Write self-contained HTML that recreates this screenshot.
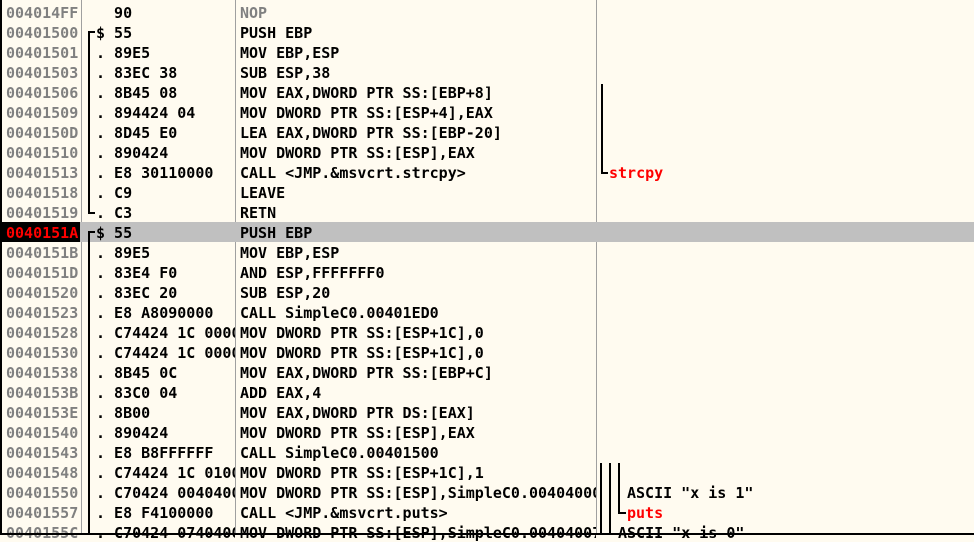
<!DOCTYPE html><html><head><style>
body{margin:0;width:974px;height:535px;overflow:hidden;background:#fffbf0;position:relative;font:bold 15px "DejaVu Sans Mono","Liberation Mono",monospace;}
.r{position:absolute;left:0;width:974px;height:20px;line-height:23px;white-space:pre;}
.r span{position:absolute;top:0;overflow:hidden;height:20px}
.a{left:6px;width:74px;color:#808080}
.h{left:96px;width:139px;color:#000}
.d{left:240px;width:356px;color:#000}
.c{left:627px;color:#000}
.sel{background:#c0c0c0}
.sel .a{left:0;width:80px;background:#000;color:#ff0000;padding-left:6px;box-sizing:border-box}
.v{position:absolute;background:#000}
.g{position:absolute;top:0;width:1px;height:535px;background:#a0a0a0}
</style></head><body>
<div class="g" style="left:81px"></div><div class="g" style="left:235px"></div><div class="g" style="left:596px"></div>
<div class="r" style="top:2px"><span class="a">004014FF</span><span class="h">  90</span><span class="d" style="color:#808080">NOP</span></div>
<div class="r" style="top:22px"><span class="a">00401500</span><span class="h">$ 55</span><span class="d">PUSH EBP</span></div>
<div class="r" style="top:42px"><span class="a">00401501</span><span class="h">. 89E5</span><span class="d">MOV EBP,ESP</span></div>
<div class="r" style="top:62px"><span class="a">00401503</span><span class="h">. 83EC 38</span><span class="d">SUB ESP,38</span></div>
<div class="r" style="top:82px"><span class="a">00401506</span><span class="h">. 8B45 08</span><span class="d">MOV EAX,DWORD PTR SS:[EBP+8]</span></div>
<div class="r" style="top:102px"><span class="a">00401509</span><span class="h">. 894424 04</span><span class="d">MOV DWORD PTR SS:[ESP+4],EAX</span></div>
<div class="r" style="top:122px"><span class="a">0040150D</span><span class="h">. 8D45 E0</span><span class="d">LEA EAX,DWORD PTR SS:[EBP-20]</span></div>
<div class="r" style="top:142px"><span class="a">00401510</span><span class="h">. 890424</span><span class="d">MOV DWORD PTR SS:[ESP],EAX</span></div>
<div class="r" style="top:162px"><span class="a">00401513</span><span class="h">. E8 30110000</span><span class="d">CALL &lt;JMP.&amp;msvcrt.strcpy&gt;</span><span style="left:609px;color:#ff0000">strcpy</span></div>
<div class="r" style="top:182px"><span class="a">00401518</span><span class="h">. C9</span><span class="d">LEAVE</span></div>
<div class="r" style="top:202px"><span class="a">00401519</span><span class="h">. C3</span><span class="d">RETN</span></div>
<div class="r sel" style="top:222px"><span class="a">0040151A</span><span class="h">$ 55</span><span class="d">PUSH EBP</span></div>
<div class="r" style="top:242px"><span class="a">0040151B</span><span class="h">. 89E5</span><span class="d">MOV EBP,ESP</span></div>
<div class="r" style="top:262px"><span class="a">0040151D</span><span class="h">. 83E4 F0</span><span class="d">AND ESP,FFFFFFF0</span></div>
<div class="r" style="top:282px"><span class="a">00401520</span><span class="h">. 83EC 20</span><span class="d">SUB ESP,20</span></div>
<div class="r" style="top:302px"><span class="a">00401523</span><span class="h">. E8 A8090000</span><span class="d">CALL SimpleC0.00401ED0</span></div>
<div class="r" style="top:322px"><span class="a">00401528</span><span class="h">. C74424 1C 00000000</span><span class="d">MOV DWORD PTR SS:[ESP+1C],0</span></div>
<div class="r" style="top:342px"><span class="a">00401530</span><span class="h">. C74424 1C 00000000</span><span class="d">MOV DWORD PTR SS:[ESP+1C],0</span></div>
<div class="r" style="top:362px"><span class="a">00401538</span><span class="h">. 8B45 0C</span><span class="d">MOV EAX,DWORD PTR SS:[EBP+C]</span></div>
<div class="r" style="top:382px"><span class="a">0040153B</span><span class="h">. 83C0 04</span><span class="d">ADD EAX,4</span></div>
<div class="r" style="top:402px"><span class="a">0040153E</span><span class="h">. 8B00</span><span class="d">MOV EAX,DWORD PTR DS:[EAX]</span></div>
<div class="r" style="top:422px"><span class="a">00401540</span><span class="h">. 890424</span><span class="d">MOV DWORD PTR SS:[ESP],EAX</span></div>
<div class="r" style="top:442px"><span class="a">00401543</span><span class="h">. E8 B8FFFFFF</span><span class="d">CALL SimpleC0.00401500</span></div>
<div class="r" style="top:462px"><span class="a">00401548</span><span class="h">. C74424 1C 01000000</span><span class="d">MOV DWORD PTR SS:[ESP+1C],1</span></div>
<div class="r" style="top:482px"><span class="a">00401550</span><span class="h">. C70424 00404000</span><span class="d">MOV DWORD PTR SS:[ESP],SimpleC0.00404000</span><span class="c">ASCII "x is 1"</span></div>
<div class="r" style="top:502px"><span class="a">00401557</span><span class="h">. E8 F4100000</span><span class="d">CALL &lt;JMP.&amp;msvcrt.puts&gt;</span><span class="c" style="color:#ff0000">puts</span></div>
<div class="r" style="top:522px"><span class="a">0040155C</span><span class="h">. C70424 07404000</span><span class="d">MOV DWORD PTR SS:[ESP],SimpleC0.00404007</span><span style="left:618px">ASCII "x is 0"</span></div>
<div class="v" style="left:88px;top:31px;width:2px;height:183px"></div>
<div class="v" style="left:88px;top:31px;width:7px;height:2px"></div>
<div class="v" style="left:88px;top:212px;width:7px;height:2px"></div>
<div class="v" style="left:88px;top:231px;width:2px;height:304px"></div>
<div class="v" style="left:88px;top:231px;width:7px;height:2px"></div>
<div class="v" style="left:601px;top:84px;width:2px;height:90px"></div>
<div class="v" style="left:601px;top:172px;width:7px;height:2px"></div>
<div class="v" style="left:600px;top:463px;width:2px;height:72px"></div>
<div class="v" style="left:609px;top:463px;width:2px;height:72px"></div>
<div class="v" style="left:618px;top:463px;width:2px;height:51px"></div>
<div class="v" style="left:618px;top:512px;width:8px;height:2px"></div>
<div class="v" style="left:0;top:0;width:2px;height:535px"></div>
<div class="v" style="left:0;top:533px;width:974px;height:2px"></div>
</body></html>
